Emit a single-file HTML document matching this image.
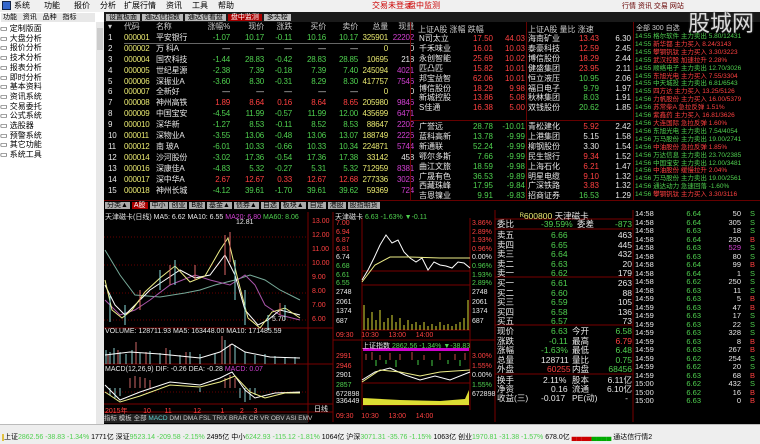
<!DOCTYPE html>
<html><head><meta charset="utf-8">
<style>
*{margin:0;padding:0;box-sizing:border-box}
body{width:760px;height:444px;overflow:hidden;background:#000;font-family:"Liberation Sans","Noto Sans CJK SC",sans-serif;font-size:9px;position:relative}
.a{position:absolute;white-space:nowrap}
.g{color:#4fd04f}.r{color:#ff4040}.w{color:#e8e8e8}.y{color:#e8e870}.p{color:#d040d0}.c{color:#60d0d0}
table{border-collapse:collapse;position:absolute;table-layout:fixed}
td{padding:0;white-space:nowrap;overflow:hidden}
.st td{height:10.9px;line-height:10.9px;letter-spacing:-0.2px}
.rk td{height:9.9px;line-height:9.9px}
.tk td{height:8.5px;line-height:8.5px}
.R{text-align:right}
</style></head><body>
<div class="a" style="left:0;top:0;width:760px;height:12px;background:#f0f0f0;color:#000;font-size:8px;line-height:11px">
<span style="margin-left:14px">系统</span><span style="margin-left:14px">功能</span><span style="margin-left:14px">报价</span><span style="margin-left:10px">分析</span><span style="margin-left:8px">扩展行情</span><span style="margin-left:10px">资讯</span><span style="margin-left:10px">工具</span><span style="margin-left:10px">帮助</span>
<span style="position:absolute;left:372px;color:#c00">交易未登录</span><span style="position:absolute;left:408px;color:#c00">盘中监测</span>
</div>
<div class="a" style="left:2px;top:1px;width:9px;height:9px;background:#36c;border:1px solid #124"></div>
<div class="a" style="left:622px;top:2px;width:105px;height:9px;font-size:7px;color:#600;line-height:9px">行情 资讯 交易 网站</div>
<div class="a" style="left:0;top:12px;width:104px;height:412px;background:#fff"></div>
<div class="a" style="left:1px;top:13px;width:94px;height:9px;background:#e8e8e8;font-size:7px;line-height:9px;color:#000">&nbsp;功能 &nbsp;&nbsp;资讯 &nbsp;&nbsp;品种 &nbsp;&nbsp;指标</div>
<div class="a" style="left:96px;top:22px;width:8px;height:402px;background:#e8e8e8"></div>
<div class="a" style="left:97px;top:28px;width:6px;height:22px;background:#ccc"></div>
<div class="a" style="left:0;top:24px;width:96px;color:#000;font-size:8px;line-height:9.7px">
<div>▭ 定制版面</div><div>▭ 大盘分析</div><div>▭ 报价分析</div><div>▭ 技术分析</div><div>▭ 报表分析</div><div>▭ 即时分析</div><div>▭ 基本资料</div><div>▭ 资讯系统</div><div>▭ 交易委托</div><div>▭ 公式系统</div><div>▭ 选股器</div><div>▭ 预警系统</div><div>▭ 其它功能</div><div>▭ 系统工具</div>
</div>
<div class="a" style="left:104px;top:12px;width:656px;height:10px;background:#1a1a1a"></div>
<div class="a" style="left:106px;top:13px;font-size:7px;line-height:9px;color:#000">
<span style="background:#bbb;padding:0 3px">设置板面</span> <span style="background:#bbb;padding:0 3px">通达信指数</span> <span style="background:#bbb;padding:0 3px">通达信看盘</span> <span style="background:#a00;color:#fff;padding:0 3px">盘中监测</span> <span style="background:#bbb;padding:0 3px">多头榜</span></div>
<div class="a" style="left:688px;top:6px;font-size:22px;color:#fff;text-shadow:0 0 2px #555;opacity:.85">股城网</div>
<table class="st" style="left:108px;top:22px;width:306px;font-size:8px">
<colgroup><col style="width:16px"><col style="width:32px"><col style="width:42px"><col style="width:32px"><col style="width:34px"><col style="width:28px"><col style="width:34px"><col style="width:32px"><col style="width:30px"><col style="width:26px"></colgroup>
<tr style="color:#ccc"><td>▾</td><td>代码</td><td>名称</td><td class="R">涨幅%</td><td class="R">现价</td><td class="R">涨跌</td><td class="R">买价</td><td class="R">卖价</td><td class="R">总量</td><td class="R">现量</td></tr>
<tr><td class="w">1</td><td class="y">000001</td><td class="w">平安银行</td><td class="R g">-1.07</td><td class="R g">10.17</td><td class="R g">-0.11</td><td class="R g">10.16</td><td class="R g">10.17</td><td class="R y">325901</td><td class="R p">22202</td></tr>
<tr><td class="w">2</td><td class="y">000002</td><td class="w">万 科A</td><td class="R w">—</td><td class="R w">—</td><td class="R w">—</td><td class="R w">—</td><td class="R w">—</td><td class="R y">0</td><td class="R w">0</td></tr>
<tr><td class="w">3</td><td class="y">000004</td><td class="w">国农科技</td><td class="R g">-1.44</td><td class="R g">28.83</td><td class="R g">-0.42</td><td class="R g">28.83</td><td class="R g">28.85</td><td class="R y">10695</td><td class="R w">218</td></tr>
<tr><td class="w">4</td><td class="y">000005</td><td class="w">世纪星源</td><td class="R g">-2.38</td><td class="R g">7.39</td><td class="R g">-0.18</td><td class="R g">7.39</td><td class="R g">7.40</td><td class="R y">245094</td><td class="R p">4021</td></tr>
<tr><td class="w">5</td><td class="y">000006</td><td class="w">深振业A</td><td class="R g">-3.60</td><td class="R g">8.30</td><td class="R g">-0.31</td><td class="R g">8.29</td><td class="R g">8.30</td><td class="R y">417757</td><td class="R p">7546</td></tr>
<tr><td class="w">6</td><td class="y">000007</td><td class="w">全新好</td><td class="R w">—</td><td class="R w">—</td><td class="R w">—</td><td class="R w">—</td><td class="R w">—</td><td class="R y">0</td><td class="R w">0</td></tr>
<tr><td class="w">7</td><td class="y">000008</td><td class="w">神州高铁</td><td class="R r">1.89</td><td class="R r">8.64</td><td class="R r">0.16</td><td class="R r">8.64</td><td class="R r">8.65</td><td class="R y">205980</td><td class="R p">9846</td></tr>
<tr><td class="w">8</td><td class="y">000009</td><td class="w">中国宝安</td><td class="R g">-4.54</td><td class="R g">11.99</td><td class="R g">-0.57</td><td class="R g">11.99</td><td class="R g">12.00</td><td class="R y">435699</td><td class="R p">6471</td></tr>
<tr><td class="w">9</td><td class="y">000010</td><td class="w">深华新</td><td class="R g">-1.27</td><td class="R g">8.53</td><td class="R g">-0.11</td><td class="R g">8.52</td><td class="R g">8.53</td><td class="R y">88647</td><td class="R p">2202</td></tr>
<tr><td class="w">10</td><td class="y">000011</td><td class="w">深物业A</td><td class="R g">-3.55</td><td class="R g">13.06</td><td class="R g">-0.48</td><td class="R g">13.06</td><td class="R g">13.07</td><td class="R y">188749</td><td class="R p">2226</td></tr>
<tr><td class="w">11</td><td class="y">000012</td><td class="w">南 玻A</td><td class="R g">-6.01</td><td class="R g">10.33</td><td class="R g">-0.66</td><td class="R g">10.33</td><td class="R g">10.34</td><td class="R y">224871</td><td class="R p">5744</td></tr>
<tr><td class="w">12</td><td class="y">000014</td><td class="w">沙河股份</td><td class="R g">-3.02</td><td class="R g">17.36</td><td class="R g">-0.54</td><td class="R g">17.36</td><td class="R g">17.38</td><td class="R y">33142</td><td class="R w">458</td></tr>
<tr><td class="w">13</td><td class="y">000016</td><td class="w">深康佳A</td><td class="R g">-4.83</td><td class="R g">5.32</td><td class="R g">-0.27</td><td class="R g">5.31</td><td class="R g">5.32</td><td class="R y">712959</td><td class="R p">8381</td></tr>
<tr><td class="w">14</td><td class="y">000017</td><td class="w">深中华A</td><td class="R r">2.67</td><td class="R r">12.67</td><td class="R r">0.33</td><td class="R r">12.67</td><td class="R r">12.68</td><td class="R y">277336</td><td class="R p">3023</td></tr>
<tr><td class="w">15</td><td class="y">000018</td><td class="w">神州长城</td><td class="R g">-4.12</td><td class="R g">39.61</td><td class="R g">-1.70</td><td class="R g">39.61</td><td class="R g">39.62</td><td class="R y">59369</td><td class="R p">724</td></tr>
</table>
<div class="a" style="left:124px;top:43px;width:290px;height:1px;background:#666"></div>
<div class="a" style="left:410px;top:22px;width:1px;height:178px;background:#600"></div>
<div class="a" style="left:526px;top:22px;width:1px;height:178px;background:#600"></div>
<div class="a" style="left:633px;top:22px;width:1px;height:178px;background:#600"></div>
<div class="a" style="left:410px;top:120px;width:223px;height:1px;background:#600"></div>
<div class="a" style="left:418px;top:24px;color:#ccc;font-size:8px">上证A股 涨幅 跌幅</div>
<div class="a" style="left:528px;top:24px;color:#ccc;font-size:8px">上证A股 量比 涨速</div>
<table class="rk" style="left:419px;top:34px;width:212px;font-size:8px">
<colgroup><col style="width:40px"><col style="width:34px"><col style="width:32px"><col style="width:40px"><col style="width:34px"><col style="width:32px"></colgroup>
<tr><td class="w">N司太立</td><td class="R r">17.50</td><td class="R r">44.03</td><td class="w" style="padding-left:3px">海南矿业</td><td class="R r">13.43</td><td class="R w">6.30</td></tr>
<tr><td class="w">千禾味业</td><td class="R r">16.01</td><td class="R r">10.03</td><td class="w" style="padding-left:3px">泰豪科技</td><td class="R r">12.59</td><td class="R w">2.45</td></tr>
<tr><td class="w">永创智能</td><td class="R r">25.69</td><td class="R r">10.02</td><td class="w" style="padding-left:3px">博信股份</td><td class="R r">18.29</td><td class="R w">2.44</td></tr>
<tr><td class="w">匹凸匹</td><td class="R r">15.82</td><td class="R r">10.01</td><td class="w" style="padding-left:3px">健盛集团</td><td class="R r">23.95</td><td class="R w">2.11</td></tr>
<tr><td class="w">邦宝益智</td><td class="R r">62.06</td><td class="R r">10.01</td><td class="w" style="padding-left:3px">恒立液压</td><td class="R g">10.95</td><td class="R w">2.06</td></tr>
<tr><td class="w">博信股份</td><td class="R r">18.29</td><td class="R r">9.98</td><td class="w" style="padding-left:3px">福日电子</td><td class="R g">9.79</td><td class="R w">1.97</td></tr>
<tr><td class="w">新城控股</td><td class="R r">13.86</td><td class="R r">5.08</td><td class="w" style="padding-left:3px">秋林集团</td><td class="R g">8.03</td><td class="R w">1.91</td></tr>
<tr><td class="w">S佳通</td><td class="R r">16.38</td><td class="R r">5.00</td><td class="w" style="padding-left:3px">双钱股份</td><td class="R g">20.62</td><td class="R w">1.85</td></tr>
</table>
<table class="rk" style="left:419px;top:122px;width:212px;font-size:8px">
<colgroup><col style="width:40px"><col style="width:34px"><col style="width:32px"><col style="width:40px"><col style="width:34px"><col style="width:32px"></colgroup>
<tr><td class="w">广誉远</td><td class="R g">28.78</td><td class="R g">-10.01</td><td class="w" style="padding-left:3px">青松建化</td><td class="R r">5.92</td><td class="R w">2.42</td></tr>
<tr><td class="w">蓝科高新</td><td class="R g">13.78</td><td class="R g">-9.99</td><td class="w" style="padding-left:3px">上港集团</td><td class="R w">5.15</td><td class="R w">1.58</td></tr>
<tr><td class="w">新通联</td><td class="R g">52.24</td><td class="R g">-9.99</td><td class="w" style="padding-left:3px">柳钢股份</td><td class="R w">3.30</td><td class="R w">1.54</td></tr>
<tr><td class="w">鄂尔多斯</td><td class="R g">7.66</td><td class="R g">-9.99</td><td class="w" style="padding-left:3px">民生银行</td><td class="R r">9.34</td><td class="R w">1.52</td></tr>
<tr><td class="w">曲江文旅</td><td class="R g">18.59</td><td class="R g">-9.98</td><td class="w" style="padding-left:3px">上海石化</td><td class="R r">6.21</td><td class="R w">1.47</td></tr>
<tr><td class="w">广晟有色</td><td class="R g">36.53</td><td class="R g">-9.89</td><td class="w" style="padding-left:3px">明星电缆</td><td class="R r">9.10</td><td class="R w">1.32</td></tr>
<tr><td class="w">西藏珠峰</td><td class="R g">17.95</td><td class="R g">-9.84</td><td class="w" style="padding-left:3px">广深铁路</td><td class="R r">3.83</td><td class="R w">1.32</td></tr>
<tr><td class="w">吉恩镍业</td><td class="R g">9.91</td><td class="R g">-9.83</td><td class="w" style="padding-left:3px">招商证券</td><td class="R g">16.53</td><td class="R w">1.29</td></tr>
</table>
<div class="a" style="left:636px;top:23px;color:#ccc;font-size:7px">全部 300 自选</div>
<div class="a" style="left:635px;top:33px;font-size:6.5px;line-height:7.9px">
<div><span class="g">14:55</span> <span class="g">格尔软件</span> <span class="g">主力卖出</span> <span class="g">5.80/12431</span></div>
<div><span class="g">14:55</span> <span class="r">新华都</span> <span class="r">主力买入</span> <span class="r">8.24/3143</span></div>
<div><span class="g">14:55</span> <span class="r">攀钢钒钛</span> <span class="r">主力买入</span> <span class="r">3.30/3223</span></div>
<div><span class="g">14:55</span> <span class="r">武汉控股</span> <span class="r">加速拉升</span> <span class="r">2.28%</span></div>
<div><span class="g">14:55</span> <span class="g">顺络电子</span> <span class="g">主力卖出</span> <span class="g">12.70/3026</span></div>
<div><span class="g">14:55</span> <span class="r">东旭光电</span> <span class="r">主力买入</span> <span class="r">7.55/3304</span></div>
<div><span class="g">14:55</span> <span class="g">中天城投</span> <span class="g">主力卖出</span> <span class="g">6.81/6543</span></div>
<div><span class="g">14:55</span> <span class="r">四方达</span> <span class="r">主力买入</span> <span class="r">13.25/5126</span></div>
<div><span class="g">14:56</span> <span class="r">力帆股份</span> <span class="r">主力买入</span> <span class="r">16.00/5379</span></div>
<div><span class="g">14:56</span> <span class="r">苏常柴A</span> <span class="r">急拉反弹</span> <span class="r">1.51%</span></div>
<div><span class="g">14:56</span> <span class="r">紫鑫药</span> <span class="r">主力买入</span> <span class="r">16.81/3626</span></div>
<div><span class="g">14:56</span> <span class="r">大连国际</span> <span class="r">急拉反弹</span> <span class="r">1.60%</span></div>
<div><span class="g">14:56</span> <span class="g">东旭光电</span> <span class="g">主力卖出</span> <span class="g">7.54/4054</span></div>
<div><span class="g">14:56</span> <span class="g">万马股份</span> <span class="g">主力卖出</span> <span class="g">19.00/2741</span></div>
<div><span class="g">14:56</span> <span class="r">中油股份</span> <span class="r">急拉反弹</span> <span class="r">1.85%</span></div>
<div><span class="g">14:56</span> <span class="g">万达信息</span> <span class="g">主力卖出</span> <span class="g">23.70/2385</span></div>
<div><span class="g">14:56</span> <span class="g">中国宝安</span> <span class="g">主力卖出</span> <span class="g">12.00/3481</span></div>
<div><span class="g">14:56</span> <span class="r">中油股份</span> <span class="r">缓慢拉升</span> <span class="r">2.04%</span></div>
<div><span class="g">14:56</span> <span class="g">万马股份</span> <span class="g">主力卖出</span> <span class="g">19.00/2561</span></div>
<div><span class="g">14:56</span> <span class="g">通达动力</span> <span class="g">急速回落</span> <span class="g">-1.60%</span></div>
<div><span class="g">14:56</span> <span class="r">攀钢钒钛</span> <span class="r">主力买入</span> <span class="r">3.30/3116</span></div>
</div>
<div class="a" style="left:104px;top:200px;width:656px;height:1px;background:#600"></div>
<div class="a" style="left:105px;top:202px;font-size:7px;line-height:8px;color:#000">
<span style="background:#aaa;padding:0 2px">分类▲</span> <span style="background:#a00;color:#fff;padding:0 2px">A股</span> <span style="background:#aaa;padding:0 2px">中小</span> <span style="background:#aaa;padding:0 2px">创业</span> <span style="background:#aaa;padding:0 2px">B股</span> <span style="background:#aaa;padding:0 2px">基金▲</span> <span style="background:#aaa;padding:0 2px">债券▲</span> <span style="background:#aaa;padding:0 2px">自选</span> <span style="background:#aaa;padding:0 2px">板块▲</span> <span style="background:#aaa;padding:0 2px">自定</span> <span style="background:#aaa;padding:0 2px">港股</span> <span style="background:#aaa;padding:0 2px">股指期货</span></div>
<svg class="a" style="left:104px;top:210px" width="656" height="214" viewBox="104 210 656 214">
<g stroke="#700" stroke-width="1" fill="none">
<line x1="308" y1="212" x2="308" y2="422"/><line x1="333" y1="212" x2="333" y2="422"/>
<line x1="104" y1="328" x2="333" y2="328"/><line x1="104" y1="364" x2="333" y2="364"/><line x1="104" y1="404" x2="333" y2="404"/>
<line x1="104" y1="412" x2="333" y2="412"/>
<line x1="333" y1="340" x2="495" y2="340"/>
<line x1="495" y1="210" x2="495" y2="422"/><line x1="633" y1="210" x2="633" y2="422"/>
<line x1="362" y1="218" x2="362" y2="410"/><line x1="470" y1="218" x2="470" y2="410"/>
<line x1="362" y1="271" x2="470" y2="271"/><line x1="362" y1="285" x2="470" y2="285"/><line x1="362" y1="330" x2="470" y2="330"/>
<line x1="362" y1="383" x2="470" y2="383"/><line x1="362" y1="405" x2="470" y2="405"/>
<line x1="495" y1="219" x2="633" y2="219"/><line x1="495" y1="229" x2="633" y2="229"/><line x1="495" y1="277" x2="633" y2="277"/><line x1="495" y1="325" x2="633" y2="325"/><line x1="495" y1="374" x2="633" y2="374"/>
</g>
<g stroke="#600" stroke-dasharray="1 2"><line x1="104" y1="237" x2="308" y2="237"/><line x1="104" y1="265" x2="308" y2="265"/><line x1="104" y1="293" x2="308" y2="293"/><line x1="104" y1="320" x2="308" y2="320"/><line x1="104" y1="392" x2="308" y2="392"/></g>
<polyline fill="none" stroke="#7a9" stroke-width="1" points="105,250 120,275 135,295 160,297 185,293 200,290 215,285 235,280 250,275 265,280 280,290 300,300"/>
<polyline fill="none" stroke="#a5a" stroke-width="1" points="105,300 120,315 135,310 150,300 170,285 195,275 210,280 230,285 245,275 255,285 265,305 280,315 300,320"/>
<polyline fill="none" stroke="#fff" stroke-width="1" points="105,285 115,305 125,315 135,305 150,290 165,280 180,270 195,278 210,275 225,255 235,275 245,310 258,325 268,320 280,310 300,315"/>
<polyline fill="none" stroke="#ee8" stroke-width="1" points="105,280 112,310 122,318 132,310 145,292 160,278 175,266 190,282 205,276 220,250 228,238 238,280 248,318 260,328 272,312 285,308 300,318"/>
<g stroke="#8dd" stroke-width="1"><line x1="110" y1="295" x2="110" y2="322"/><line x1="125" y1="305" x2="125" y2="325"/><line x1="160" y1="270" x2="160" y2="290"/><line x1="175" y1="260" x2="175" y2="285"/><line x1="235" y1="260" x2="235" y2="300"/><line x1="245" y1="290" x2="245" y2="325"/><line x1="268" y1="315" x2="268" y2="330"/><line x1="285" y1="305" x2="285" y2="320"/></g>
<g stroke="#d66" stroke-width="1"><line x1="140" y1="290" x2="140" y2="310"/><line x1="170" y1="265" x2="170" y2="285"/><line x1="195" y1="265" x2="195" y2="280"/><line x1="225" y1="235" x2="225" y2="275"/><line x1="230" y1="232" x2="230" y2="262"/><line x1="280" y1="303" x2="280" y2="315"/></g>
<g stroke="#8cc"><path d="M106 364V350M110 364V352M114 364V348M120 364V352M126 364V354M132 364V350M140 364V353M150 364V351M160 364V353M170 364V350M180 364V355M190 364V352M200 364V354M215 364V353M225 364V340M235 364V345M245 364V352M255 364V355M265 364V354M275 364V356M285 364V357M295 364V357"/></g>
<g stroke="#c66"><path d="M108 364V355M118 364V350M136 364V342M146 364V352M166 364V348M186 364V352M222 364V336M230 364V344"/></g>
<polyline fill="none" stroke="#fff" points="105,355 130,352 160,354 200,358 220,352 232,344 245,352 270,357 300,358"/>
<g stroke="#c66"><path d="M130 388V378M135 388V376M140 388V377M145 388V378M150 388V380M225 388V378M230 388V375M235 388V378"/></g>
<g stroke="#8cc"><path d="M110 388V395M115 388V398M120 388V396M200 388V392M240 388V398M245 388V402M250 388V400M255 388V395"/></g>
<polyline fill="none" stroke="#fff" points="105,385 120,400 140,392 170,382 200,385 220,378 232,372 245,390 255,398 275,393 300,392"/>
<polyline fill="none" stroke="#ee8" points="105,392 120,402 140,396 170,385 200,387 220,382 235,376 250,392 265,398 285,393 300,393"/>
<polyline fill="none" stroke="#fff" points="362,280 368,270 374,258 380,245 386,235 392,243 398,240 404,252 410,258 416,262 422,258 428,270 434,262 440,265 446,266 452,268 458,262 464,263 470,268"/>
<polyline fill="none" stroke="#ee8" points="362,282 375,265 390,257 410,257 440,258 470,258"/>
<g stroke="#dd3"><path d="M364 330V305M368 330V318M372 330V312M376 330V320M380 330V310M384 330V322M388 330V318M392 330V315M396 330V322M400 330V318M404 330V325M408 330V320M412 330V324M416 330V322M420 330V325M424 330V322M428 330V326M432 330V324M436 330V326M440 330V322M444 330V325M448 330V324M452 330V326M456 330V324M460 330V322M464 330V318M468 330V300"/></g>
<rect x="363" y="348" width="106" height="3" fill="#c0c"/>
<g stroke="#c44"><path d="M366 360V354M372 360V352M380 360V355M390 360V353M400 360V354M412 360V352M424 360V355M440 360V353M455 360V354M465 360V353"/></g>
<g stroke="#4c4"><path d="M376 360V366M386 360V364M396 360V367M418 360V365M432 360V366M448 360V364M460 360V366"/></g>
<polyline fill="none" stroke="#fff" points="362,380 375,372 390,368 405,375 420,380 435,376 450,380 470,372"/>
<polyline fill="none" stroke="#ee8" points="362,382 380,370 400,372 420,376 440,372 470,370"/>
<path d="M363 405V398L400 400L440 401L465 399L469 390V405Z" fill="#dd3"/>
</svg>
<div class="a" style="left:105px;top:212px;font-size:7px"><span class="w">天津磁卡(日线) MA5: 6.62</span> <span class="w">MA10: 6.55</span> <span class="p">MA20: 6.80</span> <span class="g">MA60: 8.06</span></div>
<div class="a w" style="left:236px;top:219px;font-size:7px">12.81</div>
<div class="a w" style="left:272px;top:316px;font-size:7px">5.70</div>
<div class="a r" style="left:312px;top:215px;font-size:7px;line-height:14px">13.00<br>12.00<br>11.00<br>10.00<br>9.00<br>8.00<br>7.00<br>6.00</div>
<div class="a w" style="left:105px;top:328px;font-size:7px">VOLUME: 128711.93 MA5: 163448.00 MA10: 171485.59</div>
<div class="a w" style="left:105px;top:366px;font-size:7px">MACD(12,26,9) DIF: -0.26 DEA: -0.28 <span class="p">MACD: 0.07</span></div>
<div class="a r" style="left:105px;top:406px;font-size:7px">2015年 &nbsp;&nbsp;&nbsp;&nbsp;&nbsp;&nbsp;&nbsp;10 &nbsp;&nbsp;&nbsp;&nbsp;&nbsp;&nbsp;11 &nbsp;&nbsp;&nbsp;&nbsp;&nbsp;&nbsp;&nbsp;&nbsp;&nbsp;&nbsp;12 &nbsp;&nbsp;&nbsp;&nbsp;&nbsp;&nbsp;&nbsp;&nbsp;&nbsp;1 &nbsp;&nbsp;&nbsp;&nbsp;&nbsp;&nbsp;&nbsp;2 &nbsp;&nbsp;&nbsp;&nbsp;3</div>
<div class="a w" style="left:314px;top:404px;font-size:7px">日线</div>
<div class="a" style="left:104px;top:414px;width:204px;height:9px;background:#222;font-size:6.5px;line-height:9px;color:#ccc">指标 模板 全部 <span class="c">MACD</span> DMI DMA FSL TRIX BRAR CR VR OBV ASI EMV</div>
<div class="a" style="left:335px;top:212px;font-size:7px"><span class="w">天津磁卡</span> <span class="g">6.63 -1.63% ▼-0.11</span></div>
<div class="a" style="left:336px;top:220px;font-size:7px;line-height:8.6px"><span class="r">7.00<br>6.94<br>6.87<br>6.81</span><br><span class="w">6.74</span><br><span class="g">6.68<br>6.61<br>6.55</span></div>
<div class="a" style="left:472px;top:220px;font-size:7px;line-height:8.6px"><span class="r">3.86%<br>2.89%<br>1.93%<br>0.96%</span><br><span class="w">0.00%</span><br><span class="g">0.96%<br>1.93%<br>2.89%</span></div>
<div class="a w" style="left:336px;top:288px;font-size:7px;line-height:9.5px">2748<br>2061<br>1374<br>687</div>
<div class="a w" style="left:472px;top:288px;font-size:7px;line-height:9.5px">2748<br>2061<br>1374<br>687</div>
<div class="a r" style="left:336px;top:332px;font-size:7px">09:30 &nbsp;&nbsp;&nbsp;10:30 &nbsp;&nbsp;&nbsp;&nbsp;13:00 &nbsp;&nbsp;&nbsp;&nbsp;14:00</div>
<div class="a" style="left:362px;top:341px;font-size:7px"><span class="w">上证指数</span> <span class="g">2862.56 -1.34% ▼-38.83</span></div>
<div class="a" style="left:336px;top:352px;font-size:7px;line-height:9.5px"><span class="r">2991<br>2946</span><br><span class="w">2901</span><br><span class="g">2857</span><br><span class="w">672898</span></div>
<div class="a" style="left:472px;top:352px;font-size:7px;line-height:9.5px"><span class="r">3.00%<br>1.55%</span><br><span class="w">0.00%</span><br><span class="g">1.55%</span><br><span class="w">672898</span></div>
<div class="a w" style="left:336px;top:398px;font-size:7px">336449</div>
<div class="a r" style="left:336px;top:413px;font-size:7px">09:30 &nbsp;&nbsp;&nbsp;10:30 &nbsp;&nbsp;&nbsp;&nbsp;13:00 &nbsp;&nbsp;&nbsp;&nbsp;14:00</div>
<div class="a y" style="left:520px;top:210px;font-size:8.5px">ᴿ600800 <span class="w">天津磁卡</span></div>
<div class="a" style="left:497px;top:220px;width:135px;font-size:8.5px;line-height:9.4px">
<div style="position:relative"><span class="w">委比</span><span class="g" style="position:absolute;left:44px">-39.59%</span><span class="w" style="position:absolute;left:80px">委差</span><span class="g" style="position:absolute;right:0">-873</span></div>
<div style="height:2px"></div>
<div style="position:relative"><span class="w">卖五</span><span class="g" style="position:absolute;left:54px">6.66</span><span class="w" style="position:absolute;right:0">463</span></div>
<div style="position:relative"><span class="w">卖四</span><span class="g" style="position:absolute;left:54px">6.65</span><span class="w" style="position:absolute;right:0">445</span></div>
<div style="position:relative"><span class="w">卖三</span><span class="g" style="position:absolute;left:54px">6.64</span><span class="w" style="position:absolute;right:0">432</span></div>
<div style="position:relative"><span class="w">卖二</span><span class="g" style="position:absolute;left:54px">6.63</span><span class="w" style="position:absolute;right:0">20</span></div>
<div style="position:relative"><span class="w">卖一</span><span class="g" style="position:absolute;left:54px">6.62</span><span class="w" style="position:absolute;right:0">179</span></div>
<div style="height:1px"></div>
<div style="position:relative"><span class="w">买一</span><span class="g" style="position:absolute;left:54px">6.61</span><span class="w" style="position:absolute;right:0">263</span></div>
<div style="position:relative"><span class="w">买二</span><span class="g" style="position:absolute;left:54px">6.60</span><span class="w" style="position:absolute;right:0">88</span></div>
<div style="position:relative"><span class="w">买三</span><span class="g" style="position:absolute;left:54px">6.59</span><span class="w" style="position:absolute;right:0">105</span></div>
<div style="position:relative"><span class="w">买四</span><span class="g" style="position:absolute;left:54px">6.58</span><span class="w" style="position:absolute;right:0">136</span></div>
<div style="position:relative"><span class="w">买五</span><span class="g" style="position:absolute;left:54px">6.57</span><span class="w" style="position:absolute;right:0">73</span></div>
<div style="height:1px"></div>
<div style="position:relative"><span class="w">现价</span><span class="g" style="position:absolute;left:54px">6.63</span><span class="w" style="position:absolute;left:75px">今开</span><span class="g" style="position:absolute;right:0">6.58</span></div>
<div style="position:relative"><span class="w">涨跌</span><span class="g" style="position:absolute;left:52px">-0.11</span><span class="w" style="position:absolute;left:75px">最高</span><span class="r" style="position:absolute;right:0">6.79</span></div>
<div style="position:relative"><span class="w">涨幅</span><span class="g" style="position:absolute;left:44px">-1.63%</span><span class="w" style="position:absolute;left:75px">最低</span><span class="g" style="position:absolute;right:0">6.48</span></div>
<div style="position:relative"><span class="w">总量</span><span class="w" style="position:absolute;left:44px">128711</span><span class="w" style="position:absolute;left:75px">量比</span><span class="g" style="position:absolute;right:0">0.75</span></div>
<div style="position:relative"><span class="w">外盘</span><span class="r" style="position:absolute;left:50px">60255</span><span class="w" style="position:absolute;left:75px">内盘</span><span class="g" style="position:absolute;right:0">68456</span></div>
<div style="height:1px"></div>
<div style="position:relative"><span class="w">换手</span><span class="w" style="position:absolute;left:46px">2.11%</span><span class="w" style="position:absolute;left:75px">股本</span><span class="w" style="position:absolute;right:0">6.11亿</span></div>
<div style="position:relative"><span class="w">净资</span><span class="w" style="position:absolute;left:54px">0.16</span><span class="w" style="position:absolute;left:75px">流通</span><span class="w" style="position:absolute;right:0">6.10亿</span></div>
<div style="position:relative"><span class="w">收益(三)</span><span class="w" style="position:absolute;left:44px">-0.017</span><span class="w" style="position:absolute;left:75px">PE(动)</span><span class="w" style="position:absolute;right:4px">-</span></div>
</div>
<table class="tk" style="left:635px;top:210px;width:120px;font-size:7.5px">
<colgroup><col style="width:26px"><col style="width:40px"><col style="width:40px"><col style="width:14px"></colgroup>
<tr><td class="w">14:58</td><td class="R g">6.64</td><td class="R w">50</td><td class="R g">S</td></tr>
<tr><td class="w">14:58</td><td class="R g">6.64</td><td class="R w">305</td><td class="R g">S</td></tr>
<tr><td class="w">14:58</td><td class="R g">6.63</td><td class="R w">18</td><td class="R g">S</td></tr>
<tr><td class="w">14:58</td><td class="R g">6.64</td><td class="R w">230</td><td class="R r">B</td></tr>
<tr><td class="w">14:58</td><td class="R g">6.63</td><td class="R p">529</td><td class="R g">S</td></tr>
<tr><td class="w">14:58</td><td class="R g">6.63</td><td class="R w">80</td><td class="R g">S</td></tr>
<tr><td class="w">14:58</td><td class="R g">6.64</td><td class="R w">99</td><td class="R r">B</td></tr>
<tr><td class="w">14:58</td><td class="R g">6.64</td><td class="R w">1</td><td class="R g">S</td></tr>
<tr><td class="w">14:58</td><td class="R g">6.62</td><td class="R w">250</td><td class="R g">S</td></tr>
<tr><td class="w">14:58</td><td class="R g">6.63</td><td class="R w">11</td><td class="R g">S</td></tr>
<tr><td class="w">14:59</td><td class="R g">6.63</td><td class="R w">5</td><td class="R r">B</td></tr>
<tr><td class="w">14:59</td><td class="R g">6.63</td><td class="R w">47</td><td class="R r">B</td></tr>
<tr><td class="w">14:59</td><td class="R g">6.63</td><td class="R w">17</td><td class="R g">S</td></tr>
<tr><td class="w">14:59</td><td class="R g">6.63</td><td class="R w">22</td><td class="R g">S</td></tr>
<tr><td class="w">14:59</td><td class="R g">6.63</td><td class="R w">328</td><td class="R g">S</td></tr>
<tr><td class="w">14:59</td><td class="R g">6.63</td><td class="R w">8</td><td class="R r">B</td></tr>
<tr><td class="w">14:59</td><td class="R g">6.63</td><td class="R w">267</td><td class="R r">B</td></tr>
<tr><td class="w">14:59</td><td class="R g">6.62</td><td class="R w">254</td><td class="R g">S</td></tr>
<tr><td class="w">14:59</td><td class="R g">6.62</td><td class="R w">20</td><td class="R g">S</td></tr>
<tr><td class="w">14:59</td><td class="R g">6.63</td><td class="R w">68</td><td class="R r">B</td></tr>
<tr><td class="w">15:00</td><td class="R g">6.62</td><td class="R w">432</td><td class="R g">S</td></tr>
<tr><td class="w">15:00</td><td class="R g">6.62</td><td class="R w">16</td><td class="R r">B</td></tr>
<tr><td class="w">15:00</td><td class="R g">6.63</td><td class="R w">0</td><td class="R r">B</td></tr>
</table>
<div class="a" style="left:0;top:424px;width:760px;height:20px;background:#eee;border-top:1px solid #bbb"></div>
<div class="a" style="left:2px;top:432px;font-size:7px;color:#000">
<span style="background:#e0c040">&nbsp;</span>上证<span class="g">2862.56 -38.83 -1.34%</span> 1771亿 深证<span class="g">9523.14 -209.58 -2.15%</span> 2495亿 中小<span class="g">6242.93 -115.12 -1.81%</span> 1064亿 沪深<span class="g">3071.31 -35.76 -1.15%</span> 1063亿 创业<span class="g">1970.81 -31.38 -1.57%</span> 678.0亿 <span style="color:#c00">▄▄▄▄</span><span style="color:#0a0">▄▄▄▄</span> 通达信行情2
</div>
</body></html>
